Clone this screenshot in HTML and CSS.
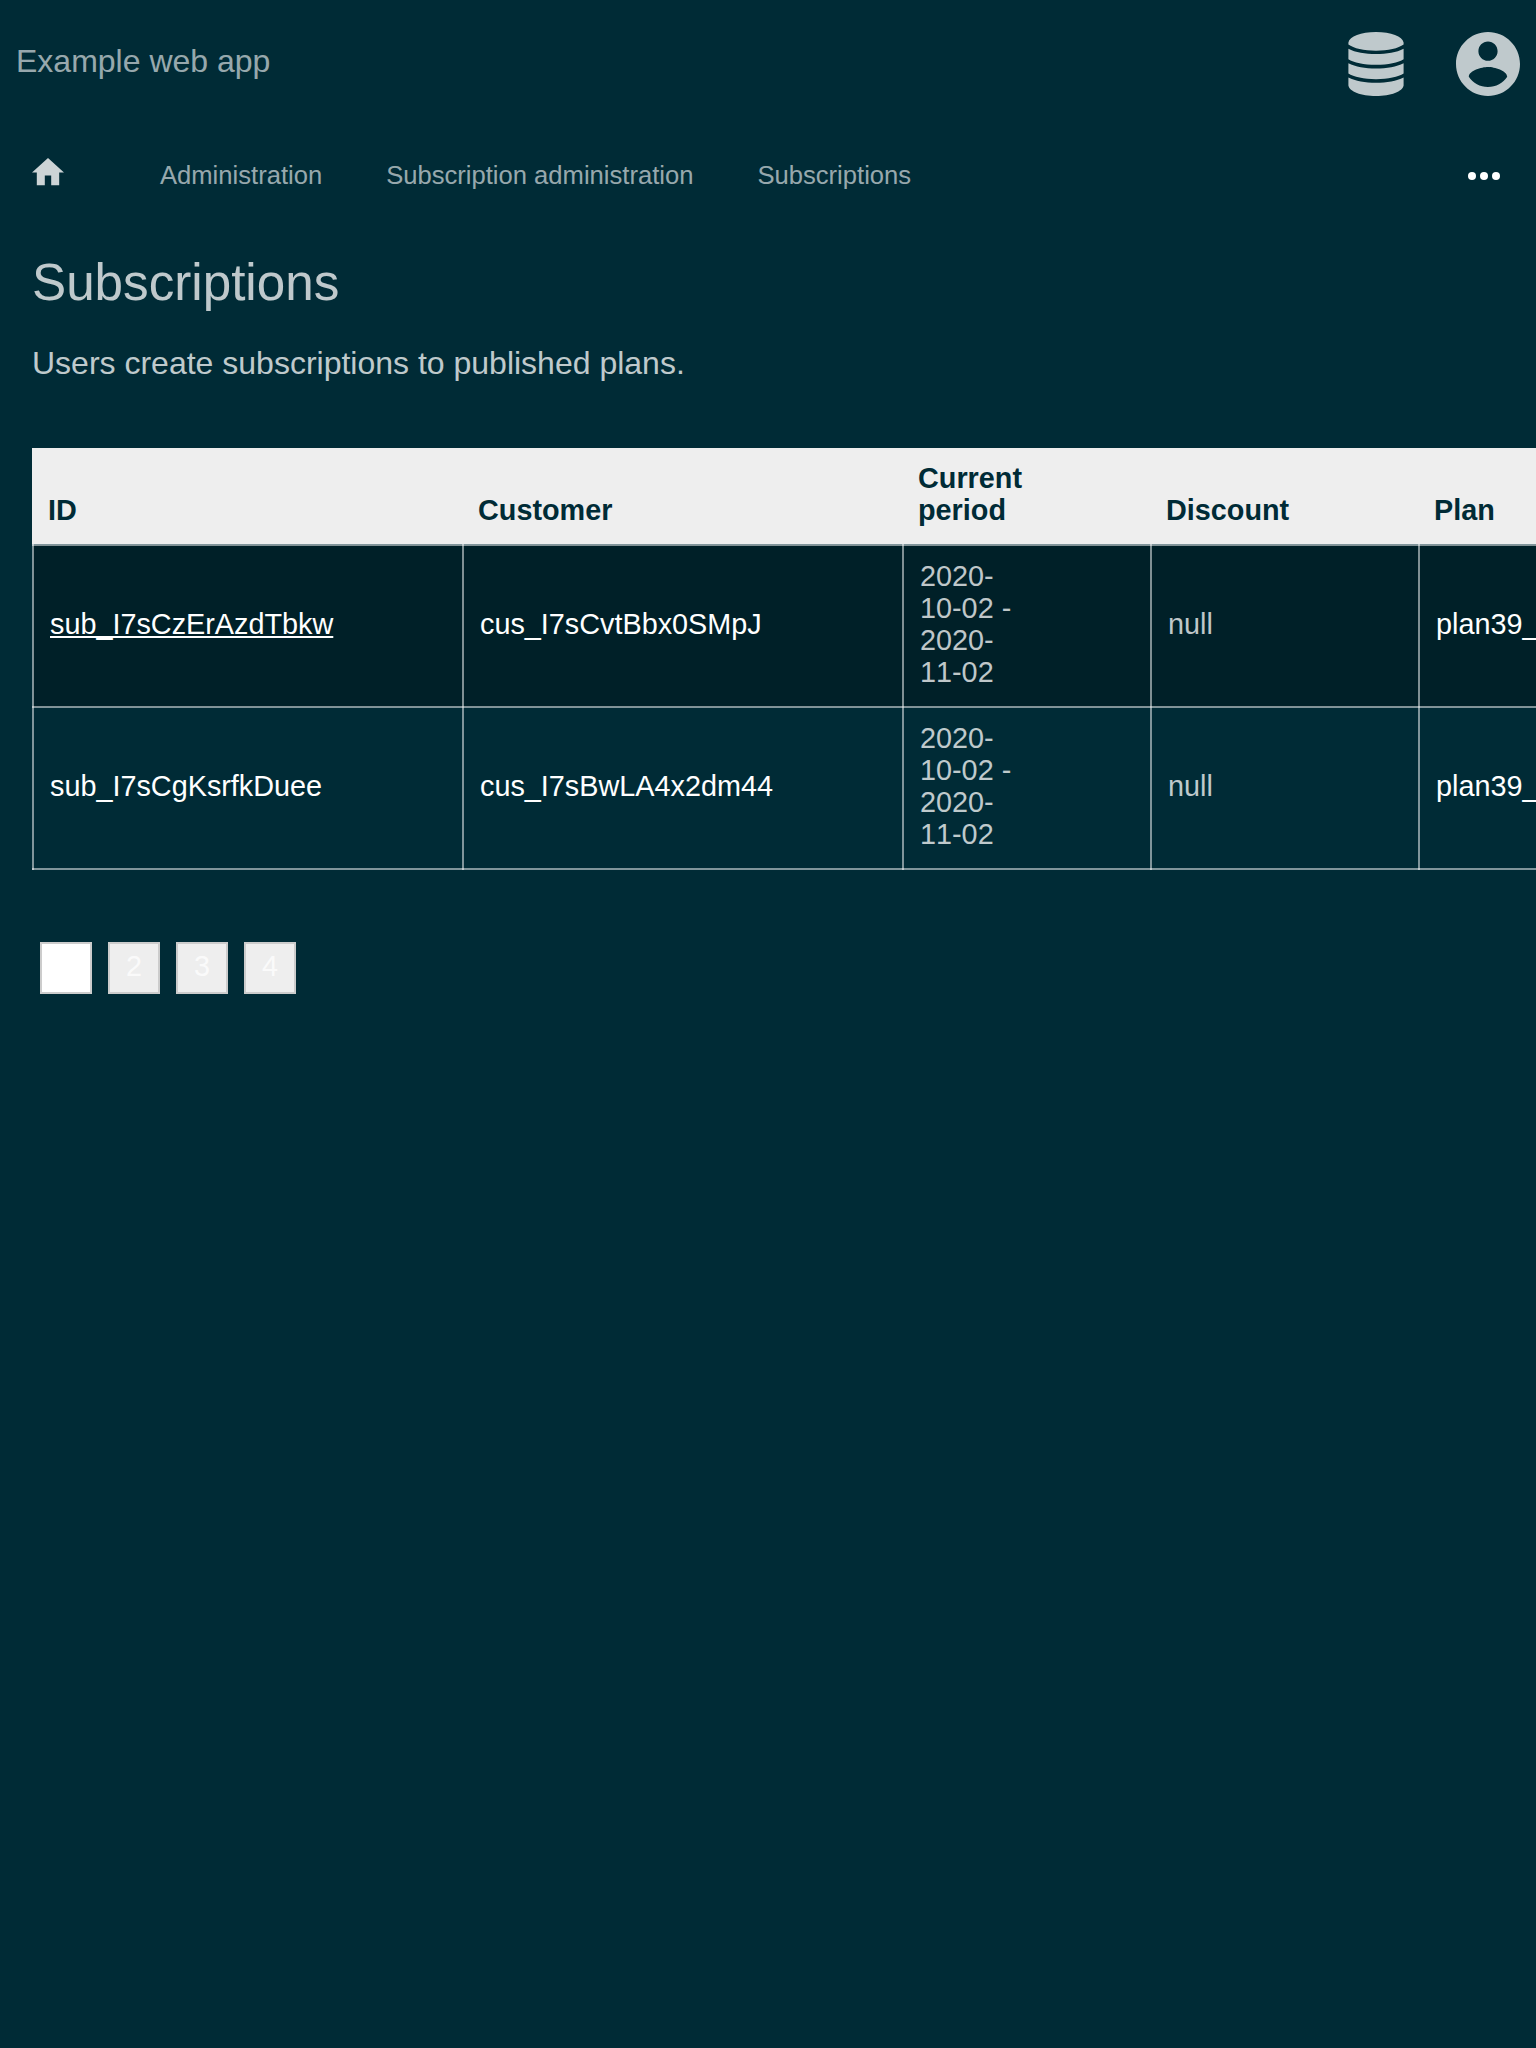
FILE: index.html
```html
<!DOCTYPE html>
<html lang="en">
<head>
<meta charset="utf-8">
<title>Subscriptions</title>
<link rel="stylesheet" href="styles.css">
</head>
<body>
<header class="header">
  <a class="brand">Example web app</a>
  <div class="menus">
    <svg class="icon-db" viewBox="0 0 56 64"><path d="M.4 10.500C1.500 4.500 13 0 28 0s26.500 4.500 27.600 10.500v2C50.500 16.300 40 18.700 28 18.700S5.500 16.300 .4 12.500zM.4 16.800c7 3.700 16.600 5.200 27.600 5.200s20.600-1.500 27.600-5.200v10.400C50.500 30.500 40 32.800 28 32.800S5.500 30.500 .4 27.200zM.4 31.200c7 3.700 16.600 5.200 27.600 5.200s20.600-1.500 27.600-5.200v10.400C50.500 44.900 40 47.200 28 47.200S5.500 44.900 .4 41.600zM.4 45.600c7 3.700 16.600 5.200 27.600 5.200s20.600-1.500 27.600-5.200v7.900C54.600 59.500 43 64 28 64S1.400 59.500 .4 53.500z"/></svg>
    <svg class="icon-user" viewBox="2 2 20 20"><path d="M12 2C6.480 2 2 6.480 2 12s4.480 10 10 10 10-4.480 10-10S17.520 2 12 2zm0 3c1.660 0 3 1.340 3 3s-1.340 3-3 3-3-1.340-3-3 1.340-3 3-3zm0 14.200c-2.500 0-4.710-1.280-6-3.220.030-1.990 4-3.080 6-3.080 1.990 0 5.970 1.090 6 3.080-1.290 1.940-3.500 3.220-6 3.220z"/></svg>
  </div>
</header>
<nav class="breadcrumb">
  <svg class="icon-home" viewBox="2 3 20 17"><path d="M10 20v-6h4v6h5v-8h3L12 3 2 12h3v8z"/></svg>
  <a class="crumb">Administration</a>
  <a class="crumb">Subscription administration</a>
  <a class="crumb">Subscriptions</a>
  <svg class="icon-more" viewBox="0 0 32 8"><circle cx="4" cy="4" r="4"/><circle cx="16" cy="4" r="4"/><circle cx="28" cy="4" r="4"/></svg>
</nav>
<main class="content">
  <h1 class="title">Subscriptions</h1>
  <p class="intro">Users create subscriptions to published plans.</p>
  <div class="table-wrap">
  <table class="list">
    <colgroup><col class="col-id"><col class="col-customer"><col class="col-period"><col class="col-discount"><col class="col-plan"></colgroup>
    <thead>
      <tr><th>ID</th><th>Customer</th><th>Current<br>period</th><th>Discount</th><th>Plan</th></tr>
    </thead>
    <tbody>
      <tr><td><a class="link active">sub_I7sCzErAzdTbkw</a></td><td><a class="link">cus_I7sCvtBbx0SMpJ</a></td><td class="period">2020-<br>10-02 -<br>2020-<br>11-02</td><td>null</td><td><a class="link">plan39_</a></td></tr>
      <tr><td><a class="link">sub_I7sCgKsrfkDuee</a></td><td><a class="link">cus_I7sBwLA4x2dm44</a></td><td class="period">2020-<br>10-02 -<br>2020-<br>11-02</td><td>null</td><td><a class="link">plan39_</a></td></tr>
    </tbody>
  </table>
  </div>
  <div class="pages">
    <a class="page current">1</a><a class="page">2</a><a class="page">3</a><a class="page">4</a>
  </div>
</main>
</body>
</html>
```
FILE: styles.css
```css
* { box-sizing: border-box; }
html { background: #002b36; }
body {
  margin: 0;
  height: 2048px;
  overflow: hidden;
  background: #002b36;
  color: rgba(255, 255, 255, .75);
  font: 32px/36px "Liberation Sans", Arial, sans-serif;
}
.header {
  display: flex;
  align-items: center;
  justify-content: space-between;
  height: 128px;
  padding: 0 16px;
}
.brand { color: rgba(255, 255, 255, .6); padding-bottom: 6px; }
.menus { display: flex; gap: 52px; fill: rgba(255, 255, 255, .75); }
.icon-db { width: 56px; height: 64px; }
.icon-user { width: 64px; height: 64px; }
.breadcrumb {
  display: flex;
  align-items: center;
  height: 96px;
  padding: 0 36px 0 32px;
  font-size: 25.6px;
  color: rgba(255, 255, 255, .6);
}
.icon-home { width: 32px; height: 27.2px; margin: 0 96px 8px 0; fill: rgba(255, 255, 255, .8); }
.crumb { margin-right: 64px; line-height: 30px; padding-bottom: 2px; }
.icon-more { width: 32px; height: 8px; margin-left: auto; fill: #fff; }
.content { padding-top: 32px; }
.title { margin: 0 32px; font-size: 51.2px; line-height: 53px; font-weight: 400; }
.intro { margin: 36px 32px 67px; }
.table-wrap { padding-left: 32px; overflow: hidden; }
.list {
  width: 1504px;
  table-layout: fixed;
  border-collapse: collapse;
  font-size: 28.8px;
  line-height: 32px;
}
.col-id { width: 430px; }
.col-customer { width: 440px; }
.col-period { width: 248px; }
.col-discount { width: 268px; }
/* a gradient fills only the padding box, so the row border stays on the dark page */
.list th {
  height: 96px;
  padding: 14px 16px 18px 15px;
  background: linear-gradient(#eee, #eee) no-repeat;
  color: #002b36;
  text-align: left;
  vertical-align: bottom;
}
.list th:first-child { box-shadow: -1px -1px 0 #eee; }
.list td {
  height: 162px;
  padding: 14px 16px 18px;
  border: 2px solid rgba(255, 255, 255, .5);
}
.list td:last-child { border-right: 0; padding-right: 0; }
.list tbody tr:first-child { background: rgba(0, 0, 0, .25); }
.period { font-kerning: none; }
.link { color: #fff; }
.link.active { text-decoration: underline; text-decoration-skip-ink: none; }
.pages { display: flex; gap: 16px; padding: 72px 40px 0; }
.page {
  width: 52px;
  height: 52px;
  border: 2px solid #ccc;
  background: #eee;
  color: rgba(255, 255, 255, .75);
  font-size: 28.8px;
  line-height: 44px;
  text-align: center;
}
.page.current { background: #fff; color: #fff; }
```
